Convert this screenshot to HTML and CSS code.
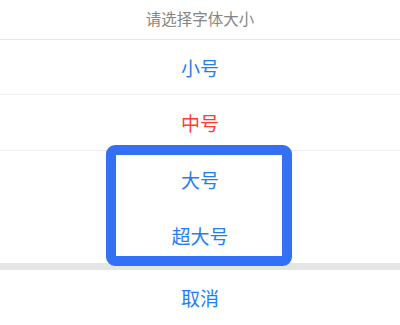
FILE: index.html
```html
<!DOCTYPE html>
<html lang="zh-CN">
<head>
<meta charset="utf-8">
<link rel="stylesheet" href="styles.css">
</head>
<body>
<div class="sheet">
  <div class="title">请选择字体大小</div>
  <div class="option first">小号</div>
  <div class="option active">中号</div>
  <div class="option nosep">大号</div>
  <div class="option nosep">超大号</div>
  <div class="gap"></div>
  <div class="option cancel">取消</div>
  <div class="highlight"></div>
</div>
</body>
</html>
```
FILE: styles.css
```css
html, body {
  margin: 0;
  padding: 0;
  background: #ffffff;
}
body {
  width: 400px;
  height: 325px;
  overflow: hidden;
  font-family: "Noto Sans CJK SC", "Noto Sans", sans-serif;
}
.sheet {
  position: relative;
  display: flex;
  flex-direction: column;
}
.title {
  height: 40px;
  box-sizing: border-box;
  border-bottom: 1px solid #e8e8e8;
  display: flex;
  align-items: center;
  justify-content: center;
  font-size: 15.5px;
  color: #858585;
  padding-bottom: 3px;
}
.option {
  height: 56px;
  box-sizing: border-box;
  border-bottom: 1px solid #efefef;
  display: flex;
  align-items: center;
  justify-content: center;
  font-size: 19px;
  color: #1f7ff0;
}
.option.first {
  height: 55px;
}
.option.active {
  color: #ff3b30;
}
.option.nosep {
  border-bottom: none;
}
.gap {
  height: 7px;
  background: #e5e5e5;
}
.option.cancel {
  height: 55px;
  border-bottom: none;
}
.highlight {
  position: absolute;
  left: 106px;
  top: 145px;
  width: 186px;
  height: 121px;
  box-sizing: border-box;
  border: 10px solid #3370f5;
  border-radius: 9px;
}
```
